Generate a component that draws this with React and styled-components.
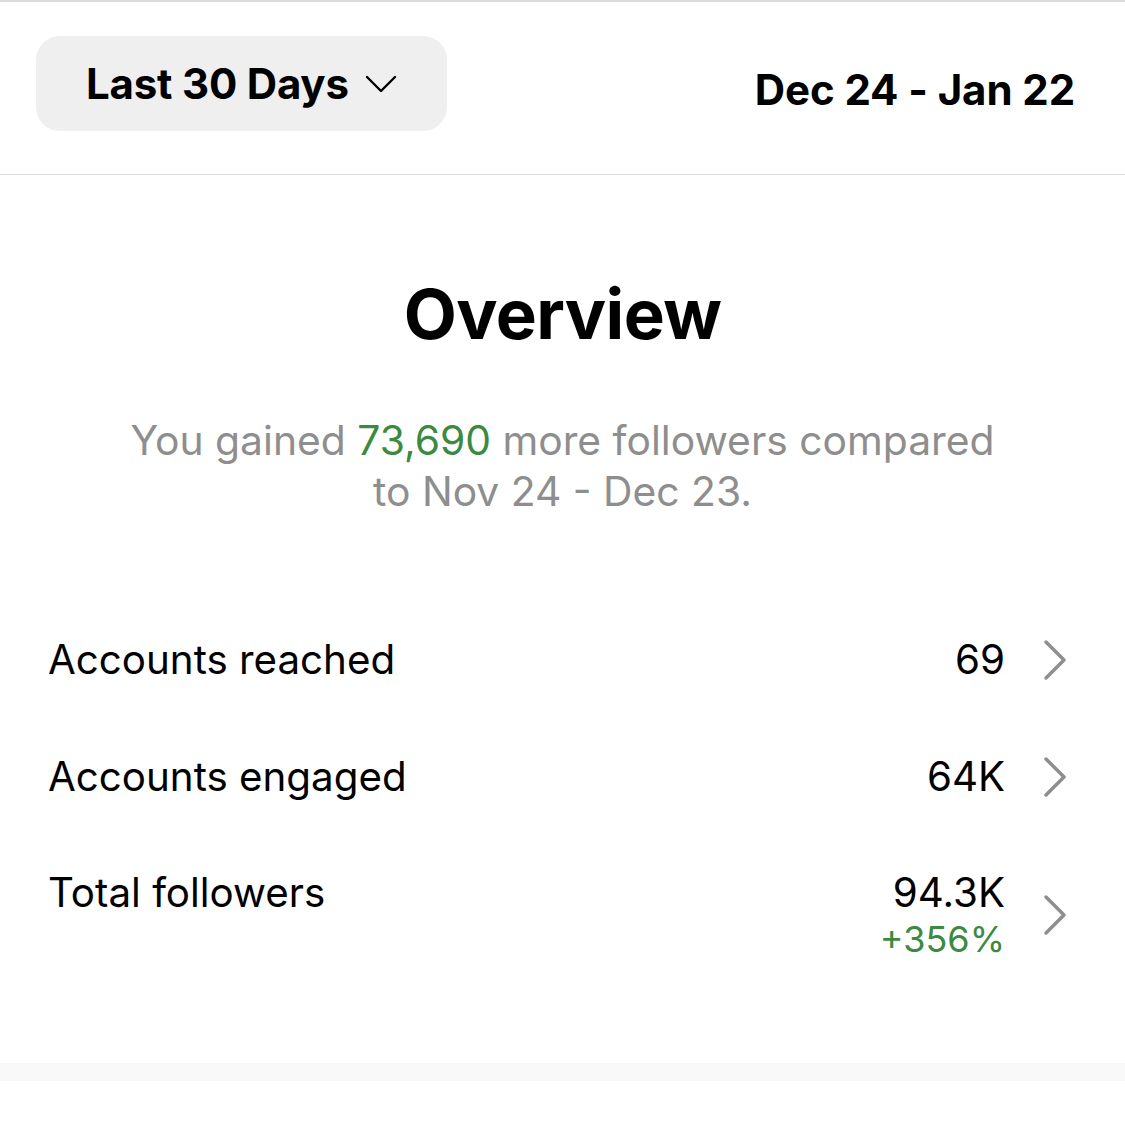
import React from 'react';
import styled, { createGlobalStyle } from 'styled-components';

const GlobalStyle = createGlobalStyle`
  html, body {
    margin: 0;
    padding: 0;
    background: #ffffff;
  }
  body {
    font-family: Inter, "Noto Sans", sans-serif;
    color: #000;
  }
`;

const Page = styled.div`
  width: 1125px;
  min-height: 1147px;
  border-top: 2px solid #dcdcdc;
  box-sizing: border-box;
  display: flex;
  flex-direction: column;
`;

const Header = styled.div`
  display: flex;
  align-items: flex-start;
  justify-content: space-between;
  padding: 34px 50px 0 36px;
  height: 173px;
  box-sizing: border-box;
  border-bottom: 1px solid #dbdbdb;
`;

const RangeButton = styled.button`
  display: flex;
  align-items: center;
  gap: 16px;
  width: 411px;
  height: 95px;
  padding: 0 0 0 50px;
  border: none;
  border-radius: 24px;
  background: #efefef;
  font-family: inherit;
  font-size: 42px;
  font-weight: 700;
  color: #000;
  letter-spacing: -0.2px;
  cursor: pointer;
`;

const DateRange = styled.div`
  font-size: 42px;
  line-height: 50px;
  font-weight: 700;
  letter-spacing: -0.1px;
  margin-top: 29px;
`;

const Overview = styled.section`
  display: flex;
  flex-direction: column;
  align-items: center;
  padding-top: 99px;
`;

const Title = styled.h1`
  margin: 0;
  font-size: 69px;
  font-weight: 700;
  letter-spacing: -0.6px;
  line-height: 80px;
`;

const Summary = styled.p`
  margin: 61px 0 0;
  width: 880px;
  text-align: center;
  font-size: 40.8px;
  line-height: 51px;
  color: #8e8e8e;
`;

const Green = styled.span`
  color: #3b8a3f;
`;

const Metrics = styled.div`
  display: flex;
  flex-direction: column;
  padding: 84px 56px 0 48px;
`;

const Row = styled.div`
  display: flex;
  align-items: center;
  height: ${(p) => (p.$tall ? '160px' : '117px')};
`;

const Label = styled.div`
  flex: 1;
  align-self: ${(p) => (p.$tall ? 'flex-start' : 'center')};
  margin-top: ${(p) => (p.$tall ? '34px' : '0')};
  font-size: 40.3px;
  line-height: 48px;
`;

const Values = styled.div`
  display: flex;
  flex-direction: column;
  align-items: flex-end;
  font-size: 40.3px;
  line-height: 48px;
`;

const Change = styled.div`
  color: #3b8a3f;
  font-size: 36px;
  line-height: 44px;
`;

const Chevron = styled.svg`
  width: 26px;
  height: 42px;
  margin-left: 38px;
  flex-shrink: 0;
`;

const Band = styled.div`
  margin-top: auto;
  height: 18px;
  background: #f9f9f9;
  margin-bottom: 66px;
`;

const Arrow = () => (
  <Chevron viewBox="0 0 26 42">
    <path d="M3 3 L21 21 L3 39" fill="none" stroke="#8e8e8e" strokeWidth="3.5" strokeLinecap="round" strokeLinejoin="round" />
  </Chevron>
);

const metrics = [
  { label: 'Accounts reached', value: '69' },
  { label: 'Accounts engaged', value: '64K' },
  { label: 'Total followers', value: '94.3K', change: '+356%' },
];

export default function App() {
  return (
    <>
      <GlobalStyle />
      <Page>
        <Header>
          <RangeButton>
            Last 30 Days
            <svg width="32" height="18" viewBox="0 0 32 18">
              <path d="M2 2 L16 16 L30 2" fill="none" stroke="#000" strokeWidth="2.4" strokeLinecap="round" strokeLinejoin="round" />
            </svg>
          </RangeButton>
          <DateRange>Dec 24 - Jan 22</DateRange>
        </Header>
        <Overview>
          <Title>Overview</Title>
          <Summary>
            You gained <Green>73,690</Green> more followers compared to Nov 24 - Dec 23.
          </Summary>
        </Overview>
        <Metrics>
          {metrics.map((m) => (
            <Row key={m.label} $tall={!!m.change}>
              <Label $tall={!!m.change}>{m.label}</Label>
              <Values>
                <div>{m.value}</div>
                {m.change && <Change>{m.change}</Change>}
              </Values>
              <Arrow />
            </Row>
          ))}
        </Metrics>
        <Band />
      </Page>
    </>
  );
}
